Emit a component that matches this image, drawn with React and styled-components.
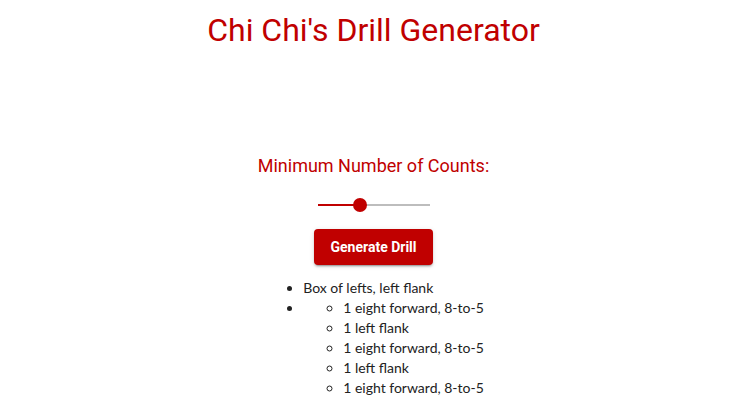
import React, { useState } from "react";
import styled, { createGlobalStyle } from "styled-components";

const Global = createGlobalStyle`
  html, body { margin: 0; padding: 0; background: #fff; }
  body { font-family: Roboto, "Liberation Sans", sans-serif; }
`;

const Page = styled.main`
  display: flex;
  flex-direction: column;
  align-items: center;
  padding-left: 6px;
`;

const Title = styled.h1`
  margin: 11px 0 0;
  font-family: Roboto, sans-serif;
  font-weight: 400;
  font-size: 32px;
  color: #c00000;
`;

const Label = styled.h3`
  margin: 106px 0 0;
  font-family: Roboto, sans-serif;
  font-weight: 400;
  font-size: 18px;
  color: #c00000;
`;

const SliderWrap = styled.div`
  position: relative;
  width: 112px;
  height: 14px;
  margin-top: 22px;
  display: flex;
  align-items: center;
`;

const Track = styled.div`
  width: 100%;
  height: 2px;
  background: #bdbdbd;
  display: flex;
`;

const Active = styled.div`
  height: 100%;
  background: #c00000;
`;

const Thumb = styled.div`
  position: absolute;
  top: 0;
  width: 14px;
  height: 14px;
  margin-left: -7px;
  border-radius: 50%;
  background: #c00000;
`;

const Button = styled.button`
  margin-top: 17px;
  height: 36px;
  padding: 0 16px;
  border: none;
  border-radius: 4px;
  background: #c00000;
  color: #fff;
  font-family: Roboto, sans-serif;
  font-weight: 700;
  font-size: 14px;
  box-shadow: 0 3px 1px -2px rgba(0,0,0,0.2), 0 2px 2px 0 rgba(0,0,0,0.14), 0 1px 5px 0 rgba(0,0,0,0.12);
  cursor: pointer;
`;

const List = styled.ul`
  margin: 13px 0 0;
  padding-left: 40px;
  text-align: left;
  font-family: Lato, "Open Sans", sans-serif;
  font-size: 14px;
  line-height: 20px;
  color: #222;
  list-style: ${(p) => (p.$nested ? "circle" : "disc")};
  ${(p) => p.$nested && "margin: 0;"}
`;

const Item = styled.li``;

export default function App() {
  const [value] = useState(38);
  const steps = [
    "1 eight forward, 8-to-5",
    "1 left flank",
    "1 eight forward, 8-to-5",
    "1 left flank",
    "1 eight forward, 8-to-5",
  ];
  return (
    <>
      <Global />
      <Page>
        <Title>Chi Chi's Drill Generator</Title>
        <Label>Minimum Number of Counts:</Label>
        <SliderWrap>
          <Track>
            <Active style={{ width: `${value}%` }} />
          </Track>
          <Thumb style={{ left: `${value}%` }} />
        </SliderWrap>
        <Button>Generate Drill</Button>
        <List>
          <Item>Box of lefts, left flank</Item>
          <Item>
            <List $nested>
              {steps.map((s, i) => (
                <Item key={i}>{s}</Item>
              ))}
            </List>
          </Item>
        </List>
      </Page>
    </>
  );
}
